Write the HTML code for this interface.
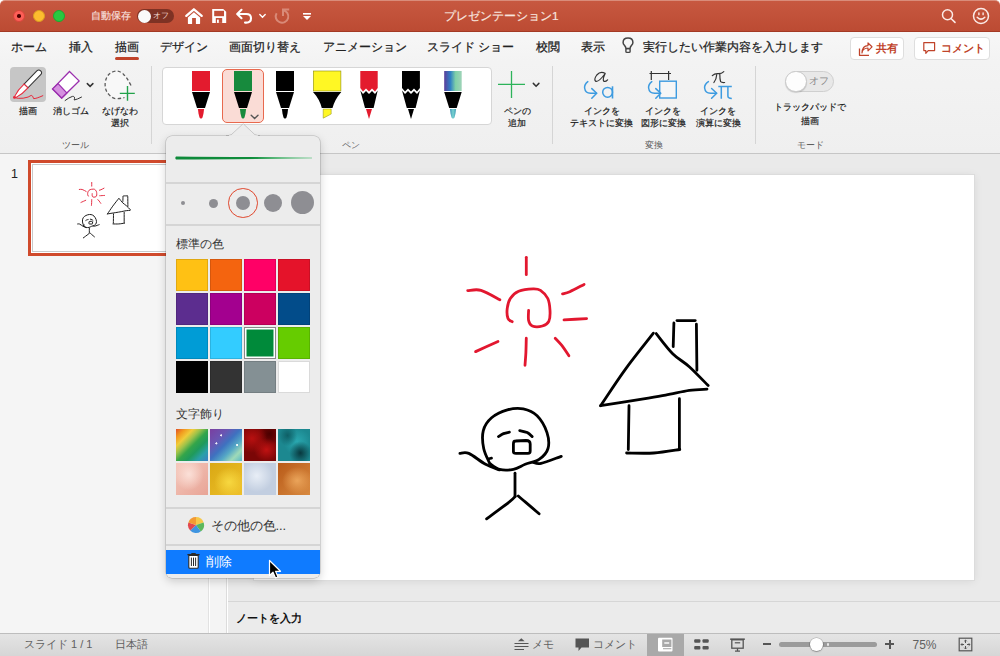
<!DOCTYPE html>
<html><head><meta charset="utf-8">
<style>
*{margin:0;padding:0;box-sizing:border-box}
html,body{width:1000px;height:656px;overflow:hidden;background:#fff}
body{font-family:"Liberation Sans",sans-serif;position:relative;color:#333}
.a{position:absolute}
.t{position:absolute;white-space:nowrap;line-height:1}
#title{left:0;top:0;width:1000px;height:32px;background:linear-gradient(#C75840,#BC4B33);border-radius:5px 5px 0 0;border-top:1px solid #D98C7A;border-bottom:1px solid #A43A25}
#tabs{left:0;top:32px;width:1000px;height:30px;background:linear-gradient(#F7F7F7,#F3F3F3)}
#ribbon{left:0;top:62px;width:1000px;height:92px;background:linear-gradient(#F3F3F3,#EFEFEF);border-bottom:1px solid #C6C6C6}
#pane{left:0;top:154px;width:209px;height:479px;background:#F5F5F5;border-right:1px solid #E2E2E2}
#split{left:210px;top:154px;width:17px;height:479px;background:#F4F4F4;border-right:1px solid #DCDCDC}
#edit{left:228px;top:154px;width:772px;height:448px;background:#EAEAEA}
#notes{left:228px;top:601px;width:772px;height:32px;background:#EBEBEB;border-top:1px solid #D6D6D6}
#status{left:0;top:633px;width:1000px;height:23px;background:linear-gradient(#E4E4E4,#D6D6D6);border-top:1px solid #BDBDBD}
#slide{left:254px;top:175px;width:720px;height:405px;background:#fff;box-shadow:0 0 0 1px #DCDCDC,0 1px 9px rgba(0,0,0,.09)}
.tab{font-size:11.5px;color:#222;top:41.5px;-webkit-text-stroke:0.25px #222}
.lbl{font-size:9.2px;color:#1a1a1a;text-align:center;-webkit-text-stroke:0.2px #1a1a1a}
.glbl{font-size:9px;color:#5a5a5a;top:140.5px}
.sw{width:32px;height:32px;box-shadow:inset 0 0 0 1px rgba(0,0,0,.12)}
.sep{width:1px;background:#D5D5D5;top:66px;height:78px}
</style></head><body>

<div id="title" class="a"></div>

<!-- TITLE BAR -->
<div class="a" style="left:13px;top:10px;width:12px;height:12px;border-radius:50%;background:#FD5F57;border:0.5px solid #D8443B"></div>
<div class="a" style="left:17.3px;top:14.3px;width:3.5px;height:3.5px;border-radius:50%;background:#4D0000"></div>
<div class="a" style="left:33px;top:10px;width:12px;height:12px;border-radius:50%;background:#FDBC2E;border:0.5px solid #DC9C22"></div>
<div class="a" style="left:53px;top:10px;width:12px;height:12px;border-radius:50%;background:#28C840;border:0.5px solid #1DA830"></div>
<div class="t" style="left:90.5px;top:11px;font-size:10.2px;color:#F6DED8;-webkit-text-stroke:.2px #F6DED8">自動保存</div>
<div class="a" style="left:137px;top:9px;width:37px;height:14px;border-radius:7px;background:#7E3224"></div>
<div class="a" style="left:137.5px;top:9.5px;width:13px;height:13px;border-radius:50%;background:#FAFAFA"></div>
<div class="t" style="left:153px;top:12px;font-size:8px;color:#F3D6CF">オフ</div>
<svg class="a" style="left:184px;top:6.8px" width="20" height="20" viewBox="0 0 20 20">
 <path d="M2.3 8.9 L9.9 2.3 L17.7 8.9" fill="none" stroke="#fff" stroke-width="2.3" stroke-linecap="round" stroke-linejoin="round"/>
 <path d="M3.9 10.4 L9.9 5.3 L16.1 10.4 V16.6 Q16.1 17 15.7 17 H11.9 V10.9 H8.1 V17 H4.3 Q3.9 17 3.9 16.6 Z" fill="#fff"/>
</svg>
<svg class="a" style="left:210px;top:8px" width="17" height="16" viewBox="0 0 17 16">
 <path d="M2.2 1 H13.2 L16.2 3.8 V14.9 H2.2 Z" fill="#fff"/>
 <rect x="4.2" y="2.8" width="9.8" height="5.4" fill="#C24F38"/>
 <rect x="5.8" y="10" width="6.4" height="4.9" fill="#C24F38"/>
 <rect x="7" y="11.6" width="1.8" height="3.3" fill="#fff"/>
</svg>
<svg class="a" style="left:235px;top:7px" width="20" height="18" viewBox="0 0 20 18">
 <path d="M6.5 2.8 L2.2 7 L6.5 11.2" fill="none" stroke="#fff" stroke-width="2.1" stroke-linecap="round" stroke-linejoin="round"/>
 <path d="M2.8 7 H11.2 Q16 7 16 11.2 Q16 15.6 11.2 15.6 H10" fill="none" stroke="#fff" stroke-width="2.1" stroke-linecap="round"/>
</svg>
<svg class="a" style="left:258px;top:13px" width="9" height="6" viewBox="0 0 9 6"><path d="M1.8 1.6 L4.5 4.2 L7.2 1.6" fill="none" stroke="#fff" stroke-width="1.4" stroke-linecap="round"/></svg>
<svg class="a" style="left:272px;top:6px" width="19" height="19" viewBox="0 0 19 19">
 <path d="M4.6 7.2 A6.3 6.3 0 1 0 11 4.2" fill="none" stroke="#D98A78" stroke-width="2"/>
 <path d="M11 10 V3.5 H17.2" fill="none" stroke="#D98A78" stroke-width="2"/>
</svg>
<svg class="a" style="left:302px;top:12px" width="10" height="9" viewBox="0 0 10 9">
 <rect x="1" y="1" width="8" height="1.6" fill="#fff"/><path d="M1 4 H9 L5 8 Z" fill="#fff"/>
</svg>
<div class="t" style="left:444px;top:11px;font-size:11.8px;color:#F7E4DF;-webkit-text-stroke:.2px #F7E4DF">プレゼンテーション1</div>
<svg class="a" style="left:940px;top:7px" width="17" height="17" viewBox="0 0 17 17">
 <circle cx="7.5" cy="7.8" r="5" fill="none" stroke="#FBEAE6" stroke-width="1.5"/>
 <path d="M11 11.5 L15 15.4" stroke="#FBEAE6" stroke-width="1.6" stroke-linecap="round"/>
</svg>
<svg class="a" style="left:972px;top:7px" width="18" height="18" viewBox="0 0 18 18">
 <circle cx="9" cy="9" r="7.5" fill="none" stroke="#FBEAE6" stroke-width="1.5"/>
 <rect x="6.2" y="5.3" width="1.4" height="3" rx=".6" fill="#FBEAE6"/><rect x="10.4" y="5.3" width="1.4" height="3" rx=".6" fill="#FBEAE6"/>
 <path d="M5.2 10.2 Q9 14 12.8 10.2" fill="none" stroke="#FBEAE6" stroke-width="1.5" stroke-linecap="round"/>
</svg>

<div id="tabs" class="a"></div>
<div id="ribbon" class="a"></div>

<!-- TABS -->
<div class="t tab" style="left:11px">ホーム</div>
<div class="t tab" style="left:69px">挿入</div>
<div class="t tab" style="left:115px">描画</div>
<div class="a" style="left:115px;top:57px;width:24px;height:3px;border-radius:2px;background:#C0432A"></div>
<div class="t tab" style="left:160px">デザイン</div>
<div class="t tab" style="left:229px">画面切り替え</div>
<div class="t tab" style="left:323px">アニメーション</div>
<div class="t tab" style="left:427px">スライド ショー</div>
<div class="t tab" style="left:536px">校閲</div>
<div class="t tab" style="left:581px">表示</div>
<svg class="a" style="left:620px;top:36.5px" width="16" height="18" viewBox="0 0 16 18">
 <path d="M6 11.6 Q5.8 9.8 4.4 8.2 Q3.1 6.8 3.1 5.4 Q3.1 1 8 1 Q12.9 1 12.9 5.4 Q12.9 6.8 11.6 8.2 Q10.2 9.8 10 11.6 Z" fill="none" stroke="#444" stroke-width="1.5" stroke-linejoin="round"/>
 <rect x="5.9" y="11.6" width="4.2" height="3.8" rx="1" fill="none" stroke="#444" stroke-width="1.4"/>
</svg>
<div class="t tab" style="left:643px">実行したい作業内容を入力します</div>
<div class="a" style="left:850px;top:37px;width:54px;height:23px;border:1px solid #DEDEDE;border-radius:4px;background:#FFFFFF"></div>
<svg class="a" style="left:858px;top:41.5px" width="15" height="15" viewBox="0 0 15 15">
 <path d="M1.5 6.5 V13.3 H11" fill="none" stroke="#C0432A" stroke-width="1.3" stroke-linejoin="round"/>
 <path d="M4 11 Q4.5 6.2 10 6 V8.8 L14 4.8 L10 1 V3.6 Q4.2 3.8 4 11 Z" fill="none" stroke="#C0432A" stroke-width="1.2" stroke-linejoin="round"/>
</svg>
<div class="t" style="left:876px;top:42.5px;font-size:11px;color:#C0432A;font-weight:bold">共有</div>
<div class="a" style="left:914px;top:37px;width:76px;height:23px;border:1px solid #DEDEDE;border-radius:4px;background:#FFFFFF"></div>
<svg class="a" style="left:922px;top:41px" width="15" height="15" viewBox="0 0 15 15">
 <path d="M1.8 1.6 H12.6 V9.6 H6.2 L3.8 12.3 V9.6 H1.8 Z" fill="none" stroke="#C0432A" stroke-width="1.2" stroke-linejoin="round"/>
</svg>
<div class="t" style="left:941px;top:42.5px;font-size:11px;color:#C0432A;font-weight:bold">コメント</div>


<!-- RIBBON -->
<div class="a" style="left:10px;top:67px;width:36px;height:35px;border-radius:4px;background:#C6C6C6"></div>
<div class="a" style="left:162px;top:67px;width:330px;height:58px;border:1px solid #D6D6D6;border-radius:4px;background:#fff"></div>
<div class="a" style="left:222px;top:69px;width:42px;height:54px;border:1.2px solid #E8694E;border-radius:5px;background:#FADCD6"></div>
<div class="a sep" style="left:151px"></div>
<div class="a sep" style="left:552px"></div>
<div class="a sep" style="left:755px"></div>
<svg class="a" style="left:0;top:0" width="1000" height="160" viewBox="0 0 1000 160">
 <defs>
  <linearGradient id="gal" x1="0" y1="0" x2="1" y2="0">
   <stop offset="0" stop-color="#5B3D9A"/><stop offset=".35" stop-color="#2F7FC4"/><stop offset=".65" stop-color="#7FD0A8"/><stop offset="1" stop-color="#9FD3B8"/>
  </linearGradient>
  <linearGradient id="galt" x1="0" y1="0" x2="1" y2="0">
   <stop offset="0" stop-color="#3C8FB8"/><stop offset=".5" stop-color="#79D3D0"/><stop offset="1" stop-color="#3E9AB5"/>
  </linearGradient>
 </defs>
 <!-- draw tool icon -->
 <g transform="translate(14.6,97.6) rotate(-45.7)">
  <path d="M16.3 -2.7 H34.6 Q37.3 -2.7 37.3 0 Q37.3 2.7 34.6 2.7 H16.3 Z" fill="#fff" stroke="#333" stroke-width="1.05"/>
  <path d="M16.3 -2.7 V2.7 Q8 3.2 1.2 0.9 Q0 0 1.2 -0.9 Q8 -3.2 16.3 -2.7 Z" fill="#fff" stroke="#E8283B" stroke-width="1.05"/>
 </g>
 <path d="M14.2 97.6 Q18 98.8 23.2 98.2 Q29 97.3 31.2 95.4 Q33 95.6 33.6 98.6 Q36 98.8 42.8 95.7" fill="none" stroke="#E8283B" stroke-width="1" stroke-linecap="round"/>
 <circle cx="14.4" cy="97.4" r="1.4" fill="#E8283B"/>
 <!-- eraser -->
 <path d="M69.5 71.5 L79.1 80.9 L61.7 98 L52.6 88.9 Z" fill="#fff" stroke="#9B2FAE" stroke-width="1.3" stroke-linejoin="miter"/>
 <path d="M58.1 83.6 L66.8 92.9 L61.7 98 L52.6 88.9 Z" fill="#D590E0" stroke="#9B2FAE" stroke-width="1.3"/>
 <path d="M65.1 100.5 Q69 97.5 72.4 96.4 Q75.5 96 74.2 100 Q77 99.5 81.5 97.1" fill="none" stroke="#333" stroke-width="1" stroke-linecap="round"/>
 <path d="M87.3 83.6 L90.1 86.4 L92.9 83.6" fill="none" stroke="#333" stroke-width="1.5" stroke-linecap="round"/>
 <!-- lasso -->
 <path d="M131 85.5 Q127 77.5 123.6 74.4 Q119.5 70.6 115.4 71.2 Q107 72.5 105.2 82.3 Q104.5 90 109 94.6 Q112.5 98.6 116.3 98.6 Q121 98.6 124.5 97.5" fill="#F8F8F8" stroke="#5a5a5a" stroke-width="1.3" stroke-dasharray="3.3 2.3"/>
 <path d="M127.5 86 V100.8 M119.8 93.4 H134.8" stroke="#21A24A" stroke-width="1.4"/>
 <!-- pens: red -->
 <g id="pen1">
  <rect x="192" y="71" width="18" height="20" fill="#E31B2E"/>
  <path d="M192 92 H210 L205 108 H197 Z" fill="#000"/>
  <path d="M197.9 109 H204.1 Q203.6 114 202.5 117.6 Q201.0 119.8 199.5 117.6 Q198.4 114 197.9 109 Z" fill="#E31B2E"/>
 </g>
 <g>
  <rect x="234" y="71" width="18" height="20" fill="#178A3D"/>
  <path d="M234 92 H252 L247 108 H239 Z" fill="#000"/>
  <path d="M239.9 109 H246.1 Q245.6 114 244.5 117.6 Q243.0 119.8 241.5 117.6 Q240.4 114 239.9 109 Z" fill="#178A3D"/>
 </g>
 <path d="M251.2 115.3 L254.6 118.5 L258 115.3" fill="none" stroke="#555" stroke-width="1.4" stroke-linecap="round"/>
 <g>
  <rect x="276" y="71" width="18" height="20" fill="#000"/>
  <path d="M276 92 H294 L289 108 H281 Z" fill="#000"/>
  <path d="M281.9 109 H288.1 Q287.6 114 286.5 117.6 Q285.0 119.8 283.5 117.6 Q282.4 114 281.9 109 Z" fill="#000"/>
 </g>
 <!-- highlighter -->
 <rect x="313.3" y="71" width="27.6" height="20" fill="#FFF724" stroke="#8A8A10" stroke-width=".6"/>
 <path d="M313 92 H341.3 Q335 99 332.5 108 H321.8 Q319.5 99 313 92 Z" fill="#000"/>
 <path d="M323.2 109 H331.2 V114 L323.2 118.2 Z" fill="#FFF724" stroke="#8A8A10" stroke-width=".5"/>
 <!-- red pencil -->
 <path d="M360.3 71 H377.7 V88 L375 91.5 L372 88.5 L369 91.5 L366 88.5 L363 91.5 L360.3 88 Z" fill="#E31B2E"/>
 <path d="M360.3 90.5 L363 94 L366 91 L369 94 L372 91 L375 94 L377.7 90.5 L373.6 108 H365 Z" fill="#000"/>
 <path d="M366 109 H372 L369 119 Z" fill="#E31B2E"/>
 <!-- black pencil -->
 <path d="M402 71 H419.9 V88 L417 91.5 L414 88.5 L411 91.5 L408 88.5 L405 91.5 L402 88 Z" fill="#000"/>
 <path d="M402 90.5 L405 94 L408 91 L411 94 L414 91 L417 94 L419.9 90.5 L415.6 108 H406.8 Z" fill="#000"/>
 <path d="M408 109 H414 L411 119 Z" fill="#000"/>
 <!-- galaxy -->
 <rect x="444.2" y="71" width="17.5" height="20" fill="url(#gal)"/>
 <path d="M444.2 92 H461.7 L456.7 108 H449.2 Z" fill="#000"/>
 <path d="M449.9 109 H456.1 Q455.6 114 454.5 117.6 Q453.0 119.8 451.5 117.6 Q450.4 114 449.9 109 Z" fill="url(#galt)"/>
 <!-- add pen -->
 <path d="M511.5 71 V98 M498 84.4 H525" stroke="#2DB35A" stroke-width="1.3"/>
 <path d="M533.3 83.4 L536.1 86.2 L538.9 83.4" fill="none" stroke="#333" stroke-width="1.5" stroke-linecap="round"/>
 <!-- convert icons -->
 <path d="M605 73.3 Q600.5 70.6 596.8 75 Q593.6 79.5 595.6 81.2 Q598.5 82.6 605.2 73.5 Q602.5 79 603.6 81 Q605.2 82.3 607.6 79.8" fill="none" stroke="#333" stroke-width="1.2" stroke-linecap="round" stroke-linejoin="round"/>
 <path d="M587.8 81.6 Q584.3 84.3 584.6 88 Q585.3 93.2 590.5 93.3 H596.5" fill="none" stroke="#3D9BE0" stroke-width="1.5" stroke-linecap="round"/>
 <path d="M591.8 88.6 L596.7 93.3 L591.8 98.2" fill="none" stroke="#3D9BE0" stroke-width="1.5" stroke-linecap="round" stroke-linejoin="round"/>
 <circle cx="607.6" cy="92.3" r="4.9" fill="none" stroke="#3D9BE0" stroke-width="1.5"/>
 <path d="M612.5 86.3 V98.5" stroke="#3D9BE0" stroke-width="1.6"/>
 <path d="M649.5 73.5 H671 M651.3 71 V80 M668.6 71 V80" stroke="#333" stroke-width="1.2"/>
 <rect x="659.7" y="81.2" width="16.6" height="16.8" fill="#F6F6F6" stroke="#3D9BE0" stroke-width="1.4"/>
 <path d="M651.8 81.6 Q648.3 84.3 648.6 88 Q649.3 93.2 654.5 93.3 H660.5" fill="none" stroke="#3D9BE0" stroke-width="1.5" stroke-linecap="round"/>
 <path d="M655.8 88.6 L660.7 93.3 L655.8 98.2" fill="none" stroke="#3D9BE0" stroke-width="1.5" stroke-linecap="round" stroke-linejoin="round"/>
 <path d="M712.3 75.6 Q714.5 73.4 718 73.6 Q721.5 73.8 723.8 71.6 M716.8 74.2 Q716.5 79 713.9 82.5 M719.8 73.9 Q719.8 79 720.6 81.6 Q721.8 82.8 724.6 82.5" fill="none" stroke="#333" stroke-width="1.2" stroke-linecap="round" stroke-linejoin="round"/>
 <path d="M708.4 81.6 Q704.3 84.3 704.6 88 Q705.3 93.2 710.5 93.2 H716.5" fill="none" stroke="#3D9BE0" stroke-width="1.5" stroke-linecap="round"/>
 <path d="M711.6 88.5 L716.7 93.2 L711.6 98.2" fill="none" stroke="#3D9BE0" stroke-width="1.5" stroke-linecap="round" stroke-linejoin="round"/>
 <path d="M718.3 86.6 H731.8 M721.3 86.6 V98.7 M727.9 86.6 V96 Q727.9 98.4 731.8 98.4" fill="none" stroke="#3D9BE0" stroke-width="1.5"/>
</svg>
<!-- mode toggle -->
<div class="a" style="left:785.5px;top:71px;width:48px;height:21px;border-radius:11px;background:#E8E8E8;border:1px solid #CFCFCF"></div>
<div class="a" style="left:785px;top:70.5px;width:21.5px;height:21.5px;border-radius:50%;background:#FDFDFD;border:1px solid #C8C8C8;box-shadow:0 1px 1px rgba(0,0,0,.15)"></div>
<div class="t" style="left:809px;top:76px;font-size:9.5px;color:#888">オフ</div>
<!-- labels -->
<div class="t lbl" style="left:18.5px;top:106.5px">描画</div>
<div class="t lbl" style="left:52.5px;top:106.5px">消しゴム</div>
<div class="t lbl" style="left:100px;top:106px;line-height:11.5px;width:40px">なげなわ<br>選択</div>
<div class="t lbl" style="left:497px;top:106px;line-height:11.5px;width:40px">ペンの<br>追加</div>
<div class="t lbl" style="left:564px;top:106px;line-height:11.5px;width:75px">インクを<br>テキストに変換</div>
<div class="t lbl" style="left:633px;top:106px;line-height:11.5px;width:60px">インクを<br>図形に変換</div>
<div class="t lbl" style="left:688px;top:106px;line-height:11.5px;width:60px">インクを<br>演算に変換</div>
<div class="t lbl" style="left:764.5px;top:101px;line-height:13.8px;width:90px">トラックパッドで<br>描画</div>
<div class="t glbl" style="left:62px">ツール</div>
<div class="t glbl" style="left:342px">ペン</div>
<div class="t glbl" style="left:645px">変換</div>
<div class="t glbl" style="left:797px">モード</div>

<div id="pane" class="a"></div>
<div id="split" class="a"></div>
<div id="edit" class="a"></div>
<div id="notes" class="a"></div>
<div id="status" class="a"></div>
<div id="slide" class="a"></div>



<!-- thumbnail -->
<div class="t" style="left:11px;top:168px;font-size:12.5px;color:#222">1</div>
<div class="a" style="left:28px;top:160px;width:165px;height:96px;border:3px solid #D04A2C;background:#fff"></div>
<div class="a" style="left:32px;top:164px;width:157px;height:88px;border:1px solid #C9C9C9;background:#fff"></div>
<svg class="a" style="left:0;top:0" width="1000" height="656" viewBox="0 0 1000 656">
 <defs><g id="drw"><g fill="none" stroke-linecap="round" stroke-linejoin="round">
<g stroke="#E2172F">
<path d="M526.3 257.3 C526.3 260.2 526.3 271.8 526.3 274.7"/>
<path d="M467.7 290.6 C469.9 290.6 475.6 288.8 481.0 290.3 C486.4 291.8 496.8 298.2 499.9 299.8"/>
<path d="M562.5 293.9 C563.7 293.5 566.2 293.3 569.8 291.7 C573.4 290.1 581.7 285.6 584.1 284.4"/>
<path d="M564.0 319.9 C567.8 319.7 582.8 318.8 586.6 318.6"/>
<path d="M475.6 351.6 C479.3 349.9 494.3 343.2 498.0 341.5"/>
<path d="M526.3 338.2 C526.2 340.6 526.1 348.0 525.9 352.5 C525.7 357.0 525.1 363.2 525.0 365.3"/>
<path d="M555.2 338.2 C556.3 339.4 559.3 342.3 561.6 345.2 C563.9 348.1 567.7 354.0 568.9 355.8"/>
<path d="M512.2 321.7 C511.5 321.2 508.8 320.8 508.0 318.6 C507.2 316.4 506.8 312.0 507.2 308.6 C507.6 305.2 508.4 301.4 510.3 298.5 C512.2 295.6 514.8 292.8 518.6 291.2 C522.4 289.6 529.6 288.9 533.2 288.8 C536.9 288.7 538.1 288.7 540.5 290.3 C542.9 291.9 546.2 295.1 547.8 298.5 C549.4 301.9 549.8 306.6 550.0 310.4 C550.2 314.2 550.1 318.8 548.8 321.4 C547.5 324.0 545.1 325.2 542.4 326.0 C539.6 326.8 534.6 326.9 532.3 326.0 C530.0 325.1 529.2 323.1 528.6 320.5 C528.0 317.9 528.6 312.1 528.6 310.4"/>
</g>
<g stroke="#000">
<path d="M489.6 463.3 C488.6 460.8 484.8 453.9 483.7 448.5 C482.6 443.1 482.0 435.7 483.3 430.6 C484.6 425.5 487.6 421.2 491.6 417.8 C495.6 414.4 502.1 411.4 507.4 409.9 C512.7 408.4 518.3 407.9 523.3 408.9 C528.2 409.9 533.1 411.9 537.1 415.8 C541.1 419.8 545.2 427.2 547.0 432.6 C548.8 438.1 549.3 444.0 548.0 448.5 C546.7 453.0 542.9 456.8 539.1 459.4 C535.3 462.0 529.5 462.6 525.2 464.3 C520.9 466.0 517.7 468.5 513.4 469.3 C509.1 470.1 503.5 470.3 499.5 469.3 C495.5 468.3 491.2 464.3 489.6 463.3"/>
<path d="M459.9 453.4 C461.4 453.4 464.5 451.6 468.8 453.4 C473.1 455.2 480.5 461.6 485.6 464.3 C490.7 467.1 497.2 469.0 499.5 469.9"/>
<path d="M533.2 462.3 C534.5 462.5 536.4 464.3 541.1 463.3 C545.8 462.3 557.9 457.5 561.3 456.4"/>
<path d="M488.6 458.8 C489.1 458.7 491.0 458.3 491.5 458.2"/>
<path d="M515.0 473.2 C515.0 477.0 515.0 492.2 515.0 496.0"/>
<path d="M515.3 496.4 C514.3 497.3 514.2 498.2 509.4 501.9 C504.6 505.6 490.4 516.0 486.6 518.8"/>
<path d="M518.3 496.0 C519.4 497.0 521.7 498.9 525.2 501.9 C528.7 504.9 536.8 511.8 539.1 513.8"/>
<path d="M498.5 436.6 C499.3 436.1 501.7 434.3 503.5 433.6 C505.3 432.9 508.4 432.4 509.4 432.2"/>
<path d="M519.7 430.6 C521.0 430.9 525.1 431.6 527.2 432.6 C529.3 433.6 531.4 435.9 532.2 436.6"/>
<path d="M653.4 333.2 C648.8 339.2 634.3 357.0 625.5 369.1 C616.7 381.2 604.8 399.6 600.6 405.7"/>
<path d="M600.6 405.7 C606.7 404.7 626.5 401.6 637.3 399.8 C648.1 398.0 656.9 396.7 665.6 395.1 C674.3 393.5 682.4 391.4 689.3 390.4 C696.2 389.4 704.0 389.4 707.0 389.2"/>
<path d="M656.2 333.6 C659.0 337.0 667.2 348.2 672.7 353.7 C678.2 359.2 683.4 361.4 689.3 366.7 C695.2 372.0 705.1 382.5 708.2 385.6"/>
<path d="M673.9 323.0 C673.8 326.9 673.3 342.7 673.2 346.6"/>
<path d="M677.0 320.6 C680.0 320.6 692.2 320.6 695.2 320.6"/>
<path d="M696.4 324.2 C696.5 331.9 696.8 362.6 696.9 370.3"/>
<path d="M629.0 405.7 C628.9 413.0 628.4 442.2 628.3 449.5"/>
<path d="M679.4 398.7 C679.4 407.2 679.4 441.0 679.4 449.5"/>
<path d="M626.6 453.0 C631.1 453.0 644.9 453.6 653.8 453.0 C662.7 452.4 675.5 450.1 679.8 449.5"/>
<path d="M515.5 441 Q513.4 441 513.4 444 V451.5 Q513.4 453.4 516 453.4 H528 Q530.2 453.4 530.2 451 V444 Q530.2 440.5 526 440.5 Z"/>
</g>
</g></g></defs>
 <use href="#drw" stroke-width="2.8"/>
 <g transform="translate(-19.85,127.9) scale(0.212)" stroke-width="4.6" opacity=".9"><use href="#drw"/></g>
</svg>
<div class="t" style="left:236px;top:612.5px;font-size:11.3px;color:#111;font-weight:bold">ノートを入力</div>
<!-- status bar -->
<div class="t" style="left:24px;top:639px;font-size:11px;color:#606060">スライド 1 / 1</div>
<div class="t" style="left:115px;top:639px;font-size:11px;color:#606060">日本語</div>
<svg class="a" style="left:513px;top:637px" width="17" height="15" viewBox="0 0 17 15">
 <path d="M5 4.2 L8.3 1.2 L11.6 4.2 Z" fill="#555"/>
 <path d="M1.5 6.5 H15.5 M1.5 9.5 H15.5 M1.5 12.5 H11" stroke="#555" stroke-width="1.2"/>
</svg>
<div class="t" style="left:532px;top:639px;font-size:11px;color:#606060">メモ</div>
<svg class="a" style="left:574px;top:637px" width="17" height="16" viewBox="0 0 17 16">
 <path d="M1.5 1.5 H15 V10.5 H7.5 L4.5 14 V10.5 H1.5 Z" fill="#555"/>
</svg>
<div class="t" style="left:593px;top:639px;font-size:11px;color:#606060">コメント</div>
<div class="a" style="left:647px;top:634px;width:37px;height:22px;background:#A9A9A9"></div>
<svg class="a" style="left:656px;top:636px" width="20" height="18" viewBox="0 0 20 18">
 <rect x="2" y="1.8" width="14.5" height="13.6" rx="1" fill="#fff"/>
 <rect x="6.2" y="3.5" width="9.2" height="7.5" fill="#A9A9A9"/>
 <path d="M8.3 7 H13.2" stroke="#fff" stroke-width="1.4"/>
 <path d="M7 12.7 H15.3" stroke="#A9A9A9" stroke-width="1.1"/>
</svg>
<svg class="a" style="left:693px;top:638px" width="17" height="13" viewBox="0 0 17 13">
 <rect x="1.2" y="1.2" width="6.2" height="3.6" rx="1" fill="#555"/><rect x="9.5" y="1.2" width="6.2" height="3.6" rx="1" fill="#555"/>
 <rect x="1.2" y="8" width="6.2" height="3.6" rx="1" fill="#555"/><rect x="9.5" y="8" width="6.2" height="3.6" rx="1" fill="#555"/>
</svg>
<svg class="a" style="left:729px;top:637px" width="17" height="16" viewBox="0 0 17 16">
 <path d="M1.2 2.2 H15.8" stroke="#555" stroke-width="1.6"/>
 <rect x="2.8" y="2.8" width="11.4" height="8.4" fill="none" stroke="#555" stroke-width="1.3"/>
 <path d="M5.8 5.8 H11.2" stroke="#555" stroke-width="1.2"/>
 <path d="M8.5 11.2 V14 M6 14.2 H11" stroke="#555" stroke-width="1.3"/>
</svg>
<div class="a" style="left:763px;top:643.3px;width:8px;height:2px;background:#555"></div>
<div class="a" style="left:779px;top:642px;width:98px;height:4.5px;border-radius:3px;background:#9B9B9B"></div>
<div class="a" style="left:826.5px;top:643px;width:2.5px;height:2.5px;border-radius:50%;background:#E8E8E8"></div>
<div class="a" style="left:810px;top:638px;width:12.5px;height:12.5px;border-radius:50%;background:#fff;box-shadow:0 0 0 .5px rgba(0,0,0,.25),0 1px 1.5px rgba(0,0,0,.25)"></div>
<div class="a" style="left:885px;top:643.3px;width:9px;height:2px;background:#555"></div>
<div class="a" style="left:888.5px;top:639.8px;width:2px;height:9px;background:#555"></div>
<div class="t" style="left:912.5px;top:638.5px;font-size:12px;color:#606060">75%</div>
<svg class="a" style="left:958px;top:637px" width="15" height="15" viewBox="0 0 15 15">
 <rect x="1.2" y="1.2" width="12.6" height="12.6" fill="none" stroke="#555" stroke-width="1.2"/>
 <path d="M7.5 3 V6 M7.5 9 V12 M3 7.5 H6 M9 7.5 H12" stroke="#555" stroke-width="1"/>
 <path d="M6.2 4.3 L7.5 3 L8.8 4.3 M6.2 10.7 L7.5 12 L8.8 10.7 M4.3 6.2 L3 7.5 L4.3 8.8 M10.7 6.2 L12 7.5 L10.7 8.8" fill="none" stroke="#555" stroke-width=".9"/>
</svg>

<!-- POPUP -->
<div class="a" style="left:166px;top:135.5px;width:154px;height:442px;background:#ECECEC;border-radius:6px;box-shadow:0 0 0 0.5px rgba(0,0,0,.22),0 3px 10px rgba(0,0,0,.18)"></div>
<svg class="a" style="left:220px;top:120px" width="46" height="20" viewBox="0 0 46 20">
 <rect x="9" y="15.2" width="29" height="4.8" fill="#ECECEC"/>
 <path d="M6 15.5 H8.5 Q11.6 15.4 14.6 11.6 L23.2 3.7 L31.4 11.4 Q34.6 15.4 37.8 15.5 H40" fill="#ECECEC" stroke="rgba(0,0,0,.2)" stroke-width=".8"/>
 <rect x="9" y="15.5" width="29" height="4.5" fill="#ECECEC"/>
</svg>
<svg class="a" style="left:166px;top:150px" width="154" height="14" viewBox="0 0 154 14">
 <defs><linearGradient id="gl" x1="0" x2="1"><stop offset="0" stop-color="#0E8A3A"/><stop offset=".55" stop-color="#0F8C3B"/><stop offset=".75" stop-color="#3DAE64"/><stop offset="1" stop-color="#8CCFA2"/></linearGradient></defs>
 <path d="M10 6.4 Q8.6 8 10 9.6 Q60 9 146 8.6 V7.4 Q60 7 10 6.4 Z" fill="url(#gl)"/>
</svg>
<div class="a" style="left:166px;top:182px;width:154px;height:2px;background:#D5D5D5"></div>
<div class="a" style="left:166px;top:224px;width:154px;height:2px;background:#D5D5D5"></div>
<div class="a" style="left:181px;top:201px;width:4px;height:4px;border-radius:50%;background:#8E8E93"></div>
<div class="a" style="left:208.5px;top:198.5px;width:9px;height:9px;border-radius:50%;background:#8E8E93"></div>
<div class="a" style="left:228.2px;top:188px;width:29.6px;height:29.6px;border-radius:50%;border:1.2px solid #E0482E"></div>
<div class="a" style="left:236px;top:196px;width:14px;height:14px;border-radius:50%;background:#8E8E93"></div>
<div class="a" style="left:263.8px;top:193.8px;width:18px;height:18px;border-radius:50%;background:#8E8E93"></div>
<div class="a" style="left:291px;top:191px;width:23px;height:23px;border-radius:50%;background:#8E8E93"></div>
<div class="t" style="left:176px;top:238.5px;font-size:11.5px;color:#333">標準の色</div>
<div class="a sw" style="left:176px;top:259px;background:#FFC114"></div>
<div class="a sw" style="left:210px;top:259px;background:#F4640F"></div>
<div class="a sw" style="left:244px;top:259px;background:#FF0066"></div>
<div class="a sw" style="left:278px;top:259px;background:#E5132A"></div>
<div class="a sw" style="left:176px;top:293px;background:#5C2D8F"></div>
<div class="a sw" style="left:210px;top:293px;background:#A3008F"></div>
<div class="a sw" style="left:244px;top:293px;background:#CC0060"></div>
<div class="a sw" style="left:278px;top:293px;background:#024C8A"></div>
<div class="a sw" style="left:176px;top:327px;background:#009CD6"></div>
<div class="a sw" style="left:210px;top:327px;background:#33CCFF"></div>
<div class="a sw" style="left:244px;top:327px;background:#008A3A;box-shadow:inset 0 0 0 1px #8A8A8A,inset 0 0 0 2.5px #fff"></div>
<div class="a sw" style="left:278px;top:327px;background:#66CC00"></div>
<div class="a sw" style="left:176px;top:361px;background:#000"></div>
<div class="a sw" style="left:210px;top:361px;background:#333"></div>
<div class="a sw" style="left:244px;top:361px;background:#849094"></div>
<div class="a sw" style="left:278px;top:361px;background:#fff;box-shadow:inset 0 0 0 1px #DADADA"></div>
<div class="t" style="left:176px;top:409px;font-size:11.5px;color:#333">文字飾り</div>
<div class="a sw" style="left:176px;top:429px;box-shadow:none;background:linear-gradient(135deg,#E0502A 0%,#F29A1E 14%,#F0CC3A 27%,#9CC24A 39%,#34A54A 52%,#1F9A5C 66%,#2AA0A8 82%,#3D7FC6 100%)"></div>
<div class="a sw" style="left:210px;top:429px;box-shadow:none;background:radial-gradient(circle at 35% 20%,rgba(255,255,255,.9) 0 .8px,transparent 1.3px),radial-gradient(circle at 20% 45%,rgba(255,255,255,.9) 0 .8px,transparent 1.3px),radial-gradient(circle at 85% 50%,rgba(255,255,255,.9) 0 .8px,transparent 1.3px),linear-gradient(135deg,#7A3FA0 0%,#6A55B2 28%,#3E72C0 48%,#55A8C6 66%,#9FDAB8 82%,#58B8C8 100%)"></div>
<div class="a sw" style="left:244px;top:429px;box-shadow:none;background:radial-gradient(ellipse at 25% 30%,#B81010 0,transparent 45%),radial-gradient(ellipse at 70% 65%,#C01212 0,transparent 40%),radial-gradient(ellipse at 80% 15%,#4A0000 0,transparent 30%),#7A0606"></div>
<div class="a sw" style="left:278px;top:429px;box-shadow:none;background:radial-gradient(ellipse at 70% 75%,#08383E 0,transparent 35%),radial-gradient(ellipse at 30% 20%,#0E5F66 0,transparent 30%),radial-gradient(ellipse at 60% 40%,#2AA8B0 0,transparent 50%),#1C8890"></div>
<div class="a sw" style="left:176px;top:463px;box-shadow:none;background:radial-gradient(ellipse at 40% 35%,#FBE0D8 0,transparent 55%),linear-gradient(135deg,#F4C8BC,#E8A496)"></div>
<div class="a sw" style="left:210px;top:463px;box-shadow:none;background:radial-gradient(ellipse at 60% 60%,#F7D840 0,transparent 55%),linear-gradient(135deg,#D9A814,#EEC02A)"></div>
<div class="a sw" style="left:244px;top:463px;box-shadow:none;background:radial-gradient(ellipse at 40% 40%,#E8EEF6 0,transparent 60%),#C2CEE0"></div>
<div class="a sw" style="left:278px;top:463px;box-shadow:none;background:radial-gradient(ellipse at 60% 55%,#EAA45A 0,transparent 55%),linear-gradient(135deg,#B85A18,#D88A40)"></div>
<div class="a" style="left:166px;top:507px;width:154px;height:2px;background:#D5D5D5"></div>
<svg class="a" style="left:187px;top:516px" width="18" height="18" viewBox="0 0 18 18">
 <path d="M9 9 L9 1 A8 8 0 0 1 16.6 6.5 Z" fill="#F5C84A"/>
 <path d="M9 9 L16.6 6.5 A8 8 0 0 1 13.7 15.5 Z" fill="#5CB85C"/>
 <path d="M9 9 L13.7 15.5 A8 8 0 0 1 3.2 14.5 Z" fill="#3E94E0"/>
 <path d="M9 9 L3.2 14.5 A8 8 0 0 1 1.4 6.5 Z" fill="#E2474E"/>
 <path d="M9 9 L1.4 6.5 A8 8 0 0 1 9 1 Z" fill="#F39A33"/>
</svg>
<div class="t" style="left:210.5px;top:519.5px;font-size:12.8px;color:#333">その他の色...</div>
<div class="a" style="left:166px;top:544px;width:154px;height:2px;background:#D5D5D5"></div>
<div class="a" style="left:166px;top:550px;width:154px;height:24px;background:#0F7BFF"></div>
<svg class="a" style="left:186px;top:552px" width="15" height="18" viewBox="0 0 15 18">
 <path d="M2.8 3.4 H12.2 V15.2 Q12.2 16.2 11.2 16.2 H3.8 Q2.8 16.2 2.8 15.2 Z" fill="#fff" stroke="#2a2a2a" stroke-width="1.1"/>
 <path d="M1.4 2.6 H13.6" stroke="#2a2a2a" stroke-width="1.3"/>
 <rect x="5.3" y="1" width="4.4" height="1.4" fill="#2a2a2a"/>
 <path d="M5.4 5.6 V14 M7.5 5.6 V14 M9.6 5.6 V14" stroke="#2a2a2a" stroke-width="1"/>
</svg>
<div class="t" style="left:206px;top:555.5px;font-size:12.5px;color:#fff">削除</div>
<svg class="a" style="left:267px;top:558.5px" width="16" height="22" viewBox="0 0 16 22">
 <path d="M2.5 1.5 V16.5 L6 13.2 L8.5 19 L11 18 L8.6 12.3 H13.5 Z" fill="#000" stroke="#fff" stroke-width="1.2" stroke-linejoin="round"/>
</svg>

</body></html>
